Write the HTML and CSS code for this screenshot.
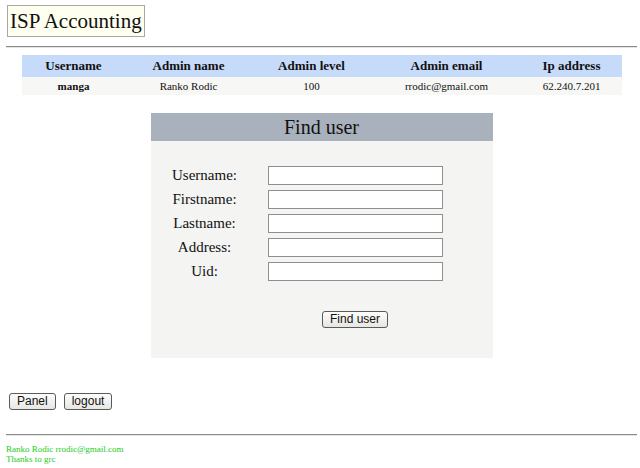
FILE: index.html
```html
<!DOCTYPE html>
<html>
  <head>
    <meta charset="utf-8" />
    <title>ISP Accounting</title>
    <link rel="stylesheet" href="styles.css">
  </head>

  <body>
    <div id="title">ISP Accounting</div>
    <hr />

    <table id="admin">
      <tr>
        <th class="c1">Username</th>
        <th class="c2">Admin name</th>
        <th class="c3">Admin level</th>
        <th class="c4">Admin email</th>
        <th class="c5">Ip address</th>
      </tr>
      <tr>
        <td><b>manga</b></td>
        <td>Ranko Rodic</td>
        <td>100</td>
        <td>rrodic@gmail.com</td>
        <td>62.240.7.201</td>
      </tr>
    </table>

    <div class="box">
      <div class="boxHead">Find user</div>
      <form class="findForm">
        <label>Username:</label>
        <input type="text" />
        <label>Firstname:</label>
        <input type="text" />
        <label>Lastname:</label>
        <input type="text" />
        <label>Address:</label>
        <input type="text" />
        <label>Uid:</label>
        <input type="text" />
        <span></span>
        <div class="submitRow"><button type="button">Find user</button></div>
      </form>
    </div>

    <div class="navBtns">
      <button>Panel</button>
      <button>logout</button>
    </div>

    <hr class="bottom" />
    <div id="footer">
      Ranko Rodic rrodic@gmail.com<br />
      Thanks to grc
    </div>
  </body>
</html>
```

FILE: styles.css
```css
body {
  margin: 0 3px 0 6px;
  padding-top: 5px;
  background: white;
  font-family: "Liberation Serif", "Times New Roman", serif;
  color: #111;
}

#title {
  display: inline-block;
  margin-left: 1px;
  padding: 0 2px;
  line-height: 30px;
  font-size: 21px;
  background-color: #fffff0;
  border: 1px solid #a8a8a8;
}

hr {
  margin: 9px 0 0 0;
  height: 0;
  border: none;
  border-top: 1px solid #8c8c8c;
  border-bottom: 1px solid #e4e4e4;
}

#admin {
  width: 600px;
  margin: 7px auto 0 auto;
  border-collapse: collapse;
  font-size: 11px;
}

#admin th {
  background-color: #c6daf9;
  height: 22px;
  font-size: 13px;
  padding: 0;
}

#admin td {
  background-color: #f7f7f5;
  height: 18px;
  text-align: center;
  padding: 0;
}

.c1 { width: 104px; }
.c2 { width: 126px; }
.c3 { width: 120px; }
.c4 { width: 150px; }
.c5 { width: 100px; }

.box {
  width: 342px;
  margin: 18px auto 0 auto;
  background-color: #f4f4f3;
}

.boxHead {
  background-color: #a9b1bc;
  height: 28px;
  line-height: 28px;
  text-align: center;
  font-size: 20px;
}

.findForm {
  display: grid;
  grid-template-columns: 88px 175px;
  column-gap: 19px;
  row-gap: 5px;
  padding: 25px 0 30px 10px;
  margin: 0;
  align-items: center;
}

.findForm label {
  text-align: center;
  font-size: 15px;
}

.findForm input {
  width: 175px;
  height: 19px;
  box-sizing: border-box;
  margin: 0;
  border: 1px solid #8f8f8f;
  background: white;
}

.submitRow {
  margin-top: 23px;
  text-align: center;
}

button {
  font-family: "Liberation Sans", Arial, sans-serif;
  font-size: 12px;
  height: 17px;
  padding: 0 7px;
  line-height: 13px;
  border: 1px solid #5a5a5a;
  border-radius: 3px;
  background: linear-gradient(#fdfdfd, #e6e6e2);
  color: #111;
}

.navBtns {
  margin-top: 33px;
  padding-left: 3px;
}

.navBtns button {
  margin-right: 4px;
}

.bottom {
  margin-top: 24px;
}

#footer {
  margin-top: 8px;
  font-size: 9px;
  line-height: 10px;
  color: #22cc22;
}
```
